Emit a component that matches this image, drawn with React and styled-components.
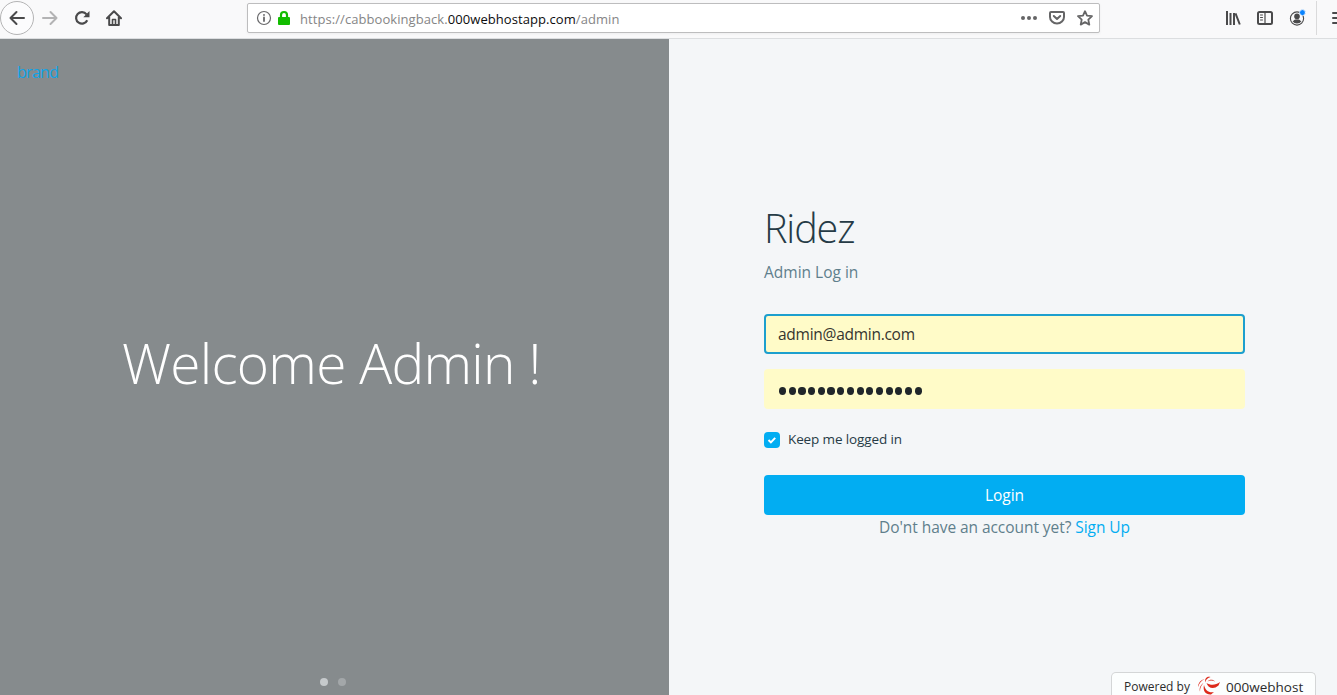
import React from "react";
import styled, { createGlobalStyle } from "styled-components";

const GlobalStyle = createGlobalStyle`
  * { box-sizing: border-box; }
  body {
    margin: 0;
    overflow: hidden;
    font-family: "Open Sans", "Noto Sans", sans-serif;
    background: #f4f6f8;
  }
`;

const Window = styled.div`
  display: flex;
  flex-direction: column;
  width: 1337px;
  height: 695px;
  overflow: hidden;
`;

const Toolbar = styled.header`
  display: flex;
  align-items: flex-start;
  flex: 0 0 39px;
  background: #f9f9fa;
  border-bottom: 1px solid #dcdee0;
`;

const NavButtons = styled.nav`
  display: flex;
  flex: none;
  width: 247px;
  height: 36px;
  align-items: center;
`;

const BackButton = styled.span`
  display: grid;
  place-items: center;
  width: 34px;
  height: 34px;
  border: 1px solid #b4b4b5;
  border-radius: 50%;
  background: #fcfcfd;
`;

const NavButton = styled.span`
  display: grid;
  place-items: center;
  width: 32px;
  height: 34px;
`;

const AddressBar = styled.div`
  display: flex;
  flex: none;
  align-items: center;
  width: 853px;
  height: 30px;
  margin-top: 3px;
  padding: 0 6px 0 8px;
  background: #fff;
  border: 1px solid #bdbdbe;
  border-radius: 2px;
  box-shadow: 0 1px 3px rgba(0, 0, 0, 0.05);
`;

const LockSlot = styled.span`
  display: flex;
  margin-left: 5px;
`;

const Url = styled.span`
  flex: 1;
  margin-left: 9px;
  padding-top: 2px;
  font-size: 13px;
  line-height: 20px;
  letter-spacing: 0.07px;
  color: #858586;
  white-space: nowrap;
`;

const Host = styled.span`
  color: #0c0c0d;
`;

const AddressActions = styled.span`
  display: flex;
  gap: 12px;
`;

const ToolIcons = styled.div`
  display: flex;
  flex: none;
  align-items: center;
  gap: 16px;
  height: 36px;
  margin-left: 125px;
`;

const MenuSlot = styled.span`
  display: flex;
  align-items: center;
  height: 34px;
  margin-left: -5px;
  padding-left: 14px;
  border-left: 1px solid #dadadb;
`;

const Page = styled.main`
  display: flex;
  flex: 1;
  min-height: 0;
`;

const Hero = styled.section`
  display: flex;
  flex-direction: column;
  width: 669px;
  background: #868b8d;
`;

const Brand = styled.a`
  margin: 21px 0 0 17px;
  font-size: 16px;
  line-height: 24px;
  letter-spacing: -0.7px;
  color: #0fa3e6;
`;

const Welcome = styled.h1`
  margin: 240px 0 0 122px;
  font-size: 55px;
  font-weight: 300;
  line-height: 78px;
  letter-spacing: -0.75px;
  color: #fff;
  white-space: nowrap;
`;

const Dots = styled.div`
  display: flex;
  gap: 10px;
  margin: auto 0 9px 320px;
`;

const Dot = styled.span`
  width: 8px;
  height: 8px;
  border-radius: 50%;
  background: ${(p) => (p.$active ? "#c6cacc" : "#a3a7a9")};
`;

const LoginSide = styled.section`
  display: flex;
  flex-direction: column;
  flex: 1;
  padding-left: 95px;
  background: #f4f6f8;
`;

const Form = styled.form`
  display: flex;
  flex-direction: column;
  width: 481px;
  padding-top: 162px;
`;

const Title = styled.h2`
  margin: 0;
  font-size: 39.5px;
  font-weight: 300;
  line-height: 54px;
  letter-spacing: -1.1px;
  color: #263b46;
`;

const Subtitle = styled.p`
  margin: 5px 0 30px;
  font-size: 15.5px;
  line-height: 24px;
  color: #5f7f8c;
`;

const Field = styled.div`
  height: 40px;
  margin-bottom: 15px;
  padding: 0 12px;
  border: 2px solid ${(p) => (p.$focused ? "#1c9fce" : "#fffbc8")};
  border-radius: 4px;
  background: #fffbc8;
  font-size: 15.5px;
  letter-spacing: -0.27px;
  line-height: 37px;
  color: #35352f;
`;

const Password = styled(Field)`
  display: flex;
  align-items: center;
  gap: 2.5px;
  padding: 4px 13px 0;
`;

const Bullet = styled.span`
  width: 7.2px;
  height: 7.5px;
  border-radius: 50%;
  background: #20262a;
`;

const Remember = styled.label`
  display: flex;
  align-items: center;
  gap: 8px;
  height: 20px;
  margin: 6px 0 25px;
  font-size: 13.5px;
  letter-spacing: -0.12px;
  color: #263b46;
`;

const Check = styled.span`
  display: grid;
  place-items: center;
  width: 16px;
  height: 16px;
  border-radius: 4px;
  background: #02adf2;
`;

const RememberText = styled.span`
  line-height: 20px;
  padding-bottom: 2px;
`;

const LoginButton = styled.button`
  height: 40px;
  padding: 0 0 1px;
  border: 0;
  border-radius: 4px;
  background: #02adf2;
  color: #fff;
  font: 400 15.5px "Open Sans", sans-serif;
`;

const SignUp = styled.p`
  margin: 0;
  text-align: center;
  font-size: 15.5px;
  letter-spacing: -0.06px;
  line-height: 25px;
  color: #5f7f8c;
  white-space: nowrap;
`;

const SignUpLink = styled.a`
  color: #02adf2;
`;

const HostBadge = styled.footer`
  display: flex;
  align-items: flex-start;
  width: 205px;
  height: 23px;
  margin: auto 0 0 347px;
  padding-left: 12px;
  border: 1px solid #d4d6d7;
  border-bottom: 0;
  border-radius: 5px 5px 0 0;
  background: #fcfefe;
  font-size: 12px;
  line-height: 28px;
  color: #2b2b2b;
  white-space: nowrap;
`;

const HostLogo = styled.svg`
  flex: none;
  margin: 3px 4px 0 7px;
`;

const HostName = styled.span`
  margin-left: 1px;
  font-size: 13.5px;
  font-weight: 500;
  letter-spacing: 0.02px;
`;

const Icon = ({ children, color = "#4a4a4b", ...rest }) => (
  <svg width="16" height="16" viewBox="0 0 16 16" fill="none" stroke={color}
    strokeWidth="2" strokeLinecap="round" strokeLinejoin="round" {...rest}>
    {children}
  </svg>
);

export default function App() {
  return (
    <Window>
      <GlobalStyle />
      <Toolbar>
        <NavButtons>
          <BackButton>
            <Icon><path d="M15 8H1.5M7.5 2 1.5 8l6 6" /></Icon>
          </BackButton>
          <NavButton>
            <Icon color="#b3b3b4"><path d="M1 8h13.5M8.5 2l6 6-6 6" /></Icon>
          </NavButton>
          <NavButton>
            <Icon strokeLinecap="butt">
              <path d="M13.2 10.2A5.8 5.8 0 1 1 12.5 4.3" strokeWidth="2.2" />
              <path d="M15.5 1v6.2H9.3z" fill="#4a4a4b" stroke="none" />
            </Icon>
          </NavButton>
          <NavButton>
            <Icon>
              <path d="M1 8.3 8 1.2l7 7.1M3.2 7v8h9.6V7" />
              <path d="M6.5 15V9.5h3V15" strokeWidth="1.6" />
            </Icon>
          </NavButton>
        </NavButtons>
        <AddressBar>
          <Icon color="#68686a" strokeWidth="1.2">
            <circle cx="8" cy="8" r="6.5" />
            <path d="M8 7.5V11M8 4.8v.3" strokeWidth="1.8" />
          </Icon>
          <LockSlot>
            <Icon width="14" viewBox="0 0 14 16" color="#12bc00">
              <path d="M4 8V5a3 3 0 0 1 6 0v3" strokeWidth="2.2" />
              <rect x="1" y="7" width="12" height="8" rx="1" fill="#12bc00" stroke="none" />
            </Icon>
          </LockSlot>
          <Url>https://cabbookingback.<Host>000webhostapp.com</Host>/admin</Url>
          <AddressActions>
            <Icon color="#656566">
              <g fill="#656566" stroke="none">
                <circle cx="2" cy="8" r="2" />
                <circle cx="8" cy="8" r="2" />
                <circle cx="14" cy="8" r="2" />
              </g>
            </Icon>
            <Icon color="#656566">
              <path d="M2 2h12a1 1 0 0 1 1 1v4a7 6.5 0 0 1-14 0V3a1 1 0 0 1 1-1z" />
              <path d="m4.8 6 3.2 3 3.2-3" />
            </Icon>
            <Icon color="#656566" strokeWidth="1.8">
              <path d="m8 1.2 2 4.5 5 .5-3.7 3.4 1 5L8 12.1l-4.3 2.5 1-5L1 6.2l5-.5z" />
            </Icon>
          </AddressActions>
        </AddressBar>
        <ToolIcons>
          <Icon strokeLinecap="butt">
            <path d="M2 1v14M5.500 3v12M9 3v12M10.500 3.300l4.300 11.200" strokeWidth="2" />
          </Icon>
          <Icon>
            <rect x="1" y="2" width="14" height="12" rx="1.5" />
            <path d="M8 2v12" strokeWidth="1.2" />
            <path d="M3.5 5h2M3.5 7.5h2M3.5 10h2" strokeWidth="1" />
          </Icon>
          <Icon strokeWidth="1.1" overflow="visible">
            <circle cx="8" cy="8.5" r="6.6" />
            <circle cx="8" cy="6.4" r="2.8" fill="#4a4a4b" stroke="none" />
            <path d="M3.5 11.2c1.2 0 1.7-1.7 3-1.7h3c1.3 0 1.8 1.7 3 1.7a5.5 5.5 0 0 1-9 0z" fill="#4a4a4b" stroke="none" />
            <circle cx="13.5" cy="2.6" r="3" fill="#0a84ff" stroke="#f9f9fa" strokeWidth=".8" />
          </Icon>
          <MenuSlot>
            <Icon><path d="M2 3h12M2 8h12M2 13h12" /></Icon>
          </MenuSlot>
        </ToolIcons>
      </Toolbar>
      <Page>
        <Hero>
          <Brand>brand</Brand>
          <Welcome>Welcome Admin !</Welcome>
          <Dots>
            <Dot $active />
            <Dot />
          </Dots>
        </Hero>
        <LoginSide>
          <Form>
            <Title>Ridez</Title>
            <Subtitle>Admin Log in</Subtitle>
            <Field $focused>admin@admin.com</Field>
            <Password>
              {Array.from({ length: 15 }, (_, i) => <Bullet key={i} />)}
            </Password>
            <Remember>
              <Check>
                <svg width="10" height="10" viewBox="0 0 10 10" fill="none" stroke="#fff" strokeWidth="2">
                  <path d="m1.5 5 2.4 2.4 4.3-4.5" />
                </svg>
              </Check>
              <RememberText>Keep me logged in</RememberText>
            </Remember>
            <LoginButton type="button">Login</LoginButton>
            <SignUp>Do'nt have an account yet? <SignUpLink>Sign Up</SignUpLink></SignUp>
          </Form>
          <HostBadge>
            Powered by
            <HostLogo width="24" height="20" viewBox="0 0 24 20" fill="#dd2a1b">
              <path d="M13.500 1C9.500 0 7.500 3 8.300 6.500 8.700 4 10 2 13.500 1z" />
              <path d="M7.500 3C3.500 4 1 7.500 1 11c1.500-4 3-6 6.500-8z" />
              <path d="M6.500 7c-3 2-4.500 5-3.500 8.500 0-3.500 1-5.500 3.500-8.500z" />
              <path d="M7 9c-1.500 6 2 10 7 9.500l3-2.500c-5 1-8.500-1-10-7z" />
              <path d="M9.500 7c1.500 5 7 7 12 2.500l1.500-3.500C18.500 9.500 13.500 9.500 9.500 7z" />
              <path d="M10.500 5.500c2-2.500 5.500-2.500 7.500 0-3-1.200-5-1.200-7.500 0z" />
            </HostLogo>
            <HostName>000webhost</HostName>
          </HostBadge>
        </LoginSide>
      </Page>
    </Window>
  );
}
